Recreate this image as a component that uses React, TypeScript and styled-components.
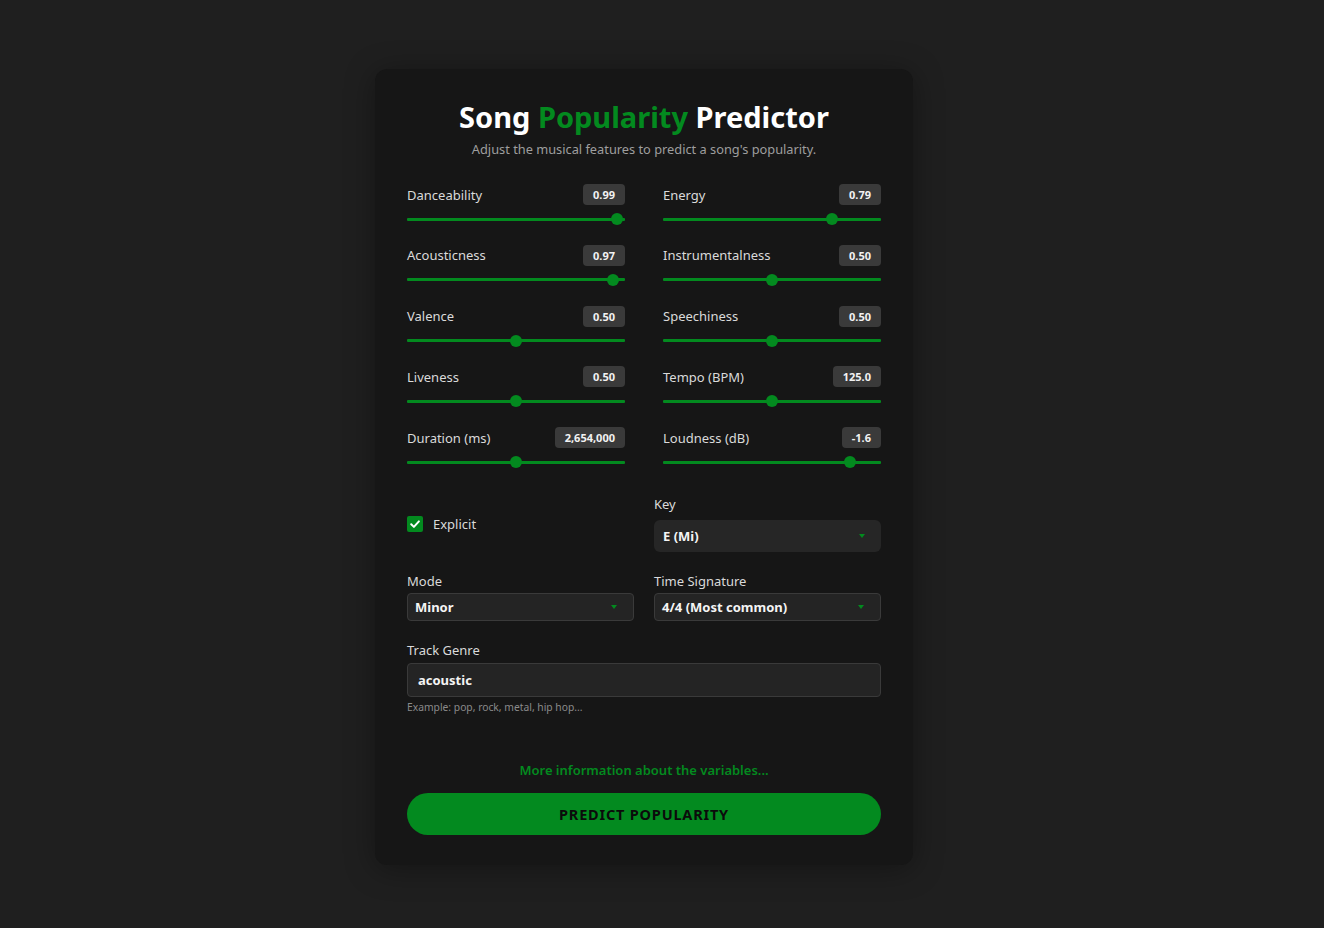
import React from "react";
import styled, { createGlobalStyle } from "styled-components";

const GREEN = "#038a1f";

const Global = createGlobalStyle`
  html, body { margin: 0; padding: 0; background: #1f1f1f; }
  body { font-family: "Noto Sans", "Open Sans", sans-serif; color: #e0e0e0; }
  * { box-sizing: border-box; }
`;

const Page = styled.div`
  min-height: 928px;
  display: flex;
  justify-content: center;
  align-items: flex-start;
  padding: 69px 36px 0 0;
`;

const Card = styled.div`
  width: 538px;
  background: #161616;
  border-radius: 12px;
  box-shadow: 0 4px 30px rgba(0, 0, 0, 0.35);
  padding: 30px 32px 30px;
  display: flex;
  flex-direction: column;
`;

const Title = styled.h1`
  margin: 0;
  font-size: 29px;
  line-height: 36px;
  font-weight: 700;
  text-align: center;
  color: #ffffff;
`;

const Accent = styled.span`
  color: ${GREEN};
`;

const Subtitle = styled.p`
  margin: 6px 0 0;
  font-size: 12.8px;
  line-height: 16px;
  text-align: center;
  color: #9e9e9e;
`;

const SliderGrid = styled.div`
  margin-top: 27px;
  display: grid;
  grid-template-columns: 1fr 1fr;
  column-gap: 38px;
  row-gap: 19.75px;
`;

const SliderField = styled.div`
  display: flex;
  flex-direction: column;
  gap: 8px;
`;

const FieldHeader = styled.div`
  display: flex;
  justify-content: space-between;
  align-items: center;
  height: 21px;
`;

const Label = styled.label`
  font-size: 13px;
  line-height: 16px;
  color: #dadada;
`;

const Badge = styled.span`
  height: 21px;
  padding: 0 10px;
  border-radius: 4px;
  background: #3a3a3a;
  color: #f2f2f2;
  font-size: 11px;
  font-weight: 700;
  display: inline-flex;
  align-items: center;
`;

const Range = styled.input`
  -webkit-appearance: none;
  appearance: none;
  width: 100%;
  height: 12px;
  margin: 0;
  background: transparent;
  &::-webkit-slider-runnable-track {
    height: 3px;
    background: ${GREEN};
    border-radius: 1px;
  }
  &::-webkit-slider-thumb {
    -webkit-appearance: none;
    width: 12px;
    height: 12px;
    border-radius: 50%;
    background: ${GREEN};
    border: none;
    margin-top: -4.5px;
  }
`;

const FormGrid = styled.div`
  display: grid;
  grid-template-columns: 1fr 1fr;
  column-gap: 20px;
  row-gap: 21px;
  margin-top: 28px;
`;

const Field = styled.div<{ $wide?: boolean }>`
  display: flex;
  flex-direction: column;
  gap: 4px;
  grid-column: ${(p) => (p.$wide ? "1 / -1" : "auto")};
`;

const CheckRow = styled.label`
  display: flex;
  align-items: center;
  align-self: center;
  gap: 10px;
  font-size: 13px;
  color: #dadada;
`;

const CheckBox = styled.span`
  width: 16px;
  height: 16px;
  border-radius: 2px;
  background: ${GREEN};
  display: inline-flex;
  align-items: center;
  justify-content: center;
`;

const SelectBox = styled.div<{ $soft?: boolean }>`
  display: flex;
  align-items: center;
  justify-content: space-between;
  margin-top: ${(p) => (p.$soft ? "4px" : "0")};
  height: ${(p) => (p.$soft ? "32px" : "28px")};
  padding: ${(p) => (p.$soft ? "0 16px 0 9px" : "0 16px 0 7px")};
  border-radius: ${(p) => (p.$soft ? "6px" : "4px")};
  background: ${(p) => (p.$soft ? "#262626" : "#242424")};
  border: ${(p) => (p.$soft ? "none" : "1px solid #3a3a3a")};
  font-size: 13px;
  font-weight: 700;
  color: #f4f4f4;
`;

const Caret = styled.span`
  width: 0;
  height: 0;
  border-left: 3.5px solid transparent;
  border-right: 3.5px solid transparent;
  border-top: 4px solid ${GREEN};
`;

const TextInput = styled.div`
  margin-top: 1px;
  height: 34px;
  display: flex;
  align-items: center;
  padding: 0 10px;
  border: 1px solid #3a3a3a;
  border-radius: 4px;
  background: #242424;
  font-size: 13px;
  font-weight: 700;
  color: #f4f4f4;
`;

const Hint = styled.span`
  margin-top: -1px;
  font-size: 10.3px;
  line-height: 14px;
  color: #8a8a8a;
`;

const MoreLink = styled.a`
  margin-top: 48px;
  text-align: center;
  font-size: 13px;
  line-height: 16px;
  font-weight: 600;
  color: ${GREEN};
  text-decoration: none;
`;

const PredictButton = styled.button`
  margin-top: 15px;
  height: 42px;
  border: none;
  border-radius: 21px;
  background: ${GREEN};
  color: #0b0b0b;
  font-family: inherit;
  font-size: 14.5px;
  font-weight: 700;
  letter-spacing: 0.8px;
  text-transform: uppercase;
`;

type SliderSpec = { label: string; value: string; min: number; max: number; v: number; step: number };

const sliders: SliderSpec[] = [
  { label: "Danceability", value: "0.99", min: 0, max: 1, v: 0.99, step: 0.01 },
  { label: "Energy", value: "0.79", min: 0, max: 1, v: 0.79, step: 0.01 },
  { label: "Acousticness", value: "0.97", min: 0, max: 1, v: 0.97, step: 0.01 },
  { label: "Instrumentalness", value: "0.50", min: 0, max: 1, v: 0.5, step: 0.01 },
  { label: "Valence", value: "0.50", min: 0, max: 1, v: 0.5, step: 0.01 },
  { label: "Speechiness", value: "0.50", min: 0, max: 1, v: 0.5, step: 0.01 },
  { label: "Liveness", value: "0.50", min: 0, max: 1, v: 0.5, step: 0.01 },
  { label: "Tempo (BPM)", value: "125.0", min: 0, max: 250, v: 125, step: 0.1 },
  { label: "Duration (ms)", value: "2,654,000", min: 0, max: 5308000, v: 2654000, step: 1000 },
  { label: "Loudness (dB)", value: "-1.6", min: -13, max: 0, v: -1.6, step: 0.1 },
];

export default function App() {
  return (
    <>
      <Global />
      <Page>
        <Card>
          <Title>
            Song <Accent>Popularity</Accent> Predictor
          </Title>
          <Subtitle>Adjust the musical features to predict a song's popularity.</Subtitle>

          <SliderGrid>
            {sliders.map((s) => (
              <SliderField key={s.label}>
                <FieldHeader>
                  <Label>{s.label}</Label>
                  <Badge>{s.value}</Badge>
                </FieldHeader>
                <Range type="range" min={s.min} max={s.max} step={s.step} defaultValue={s.v} />
              </SliderField>
            ))}
          </SliderGrid>

          <FormGrid>
            <CheckRow>
              <CheckBox>
                <svg width="12" height="12" viewBox="0 0 12 12">
                  <path d="M2.2 6.3 L4.9 8.9 L9.9 3.4" fill="none" stroke="#fff" strokeWidth="2" strokeLinecap="round" strokeLinejoin="round" />
                </svg>
              </CheckBox>
              Explicit
            </CheckRow>
            <Field>
              <Label>Key</Label>
              <SelectBox $soft>
                E (Mi)
                <Caret />
              </SelectBox>
            </Field>
            <Field>
              <Label>Mode</Label>
              <SelectBox>
                Minor
                <Caret />
              </SelectBox>
            </Field>
            <Field>
              <Label>Time Signature</Label>
              <SelectBox>
                4/4 (Most common)
                <Caret />
              </SelectBox>
            </Field>
            <Field $wide>
              <Label>Track Genre</Label>
              <TextInput>acoustic</TextInput>
              <Hint>Example: pop, rock, metal, hip hop...</Hint>
            </Field>
          </FormGrid>

          <MoreLink href="#">More information about the variables...</MoreLink>
          <PredictButton>Predict Popularity</PredictButton>
        </Card>
      </Page>
    </>
  );
}
